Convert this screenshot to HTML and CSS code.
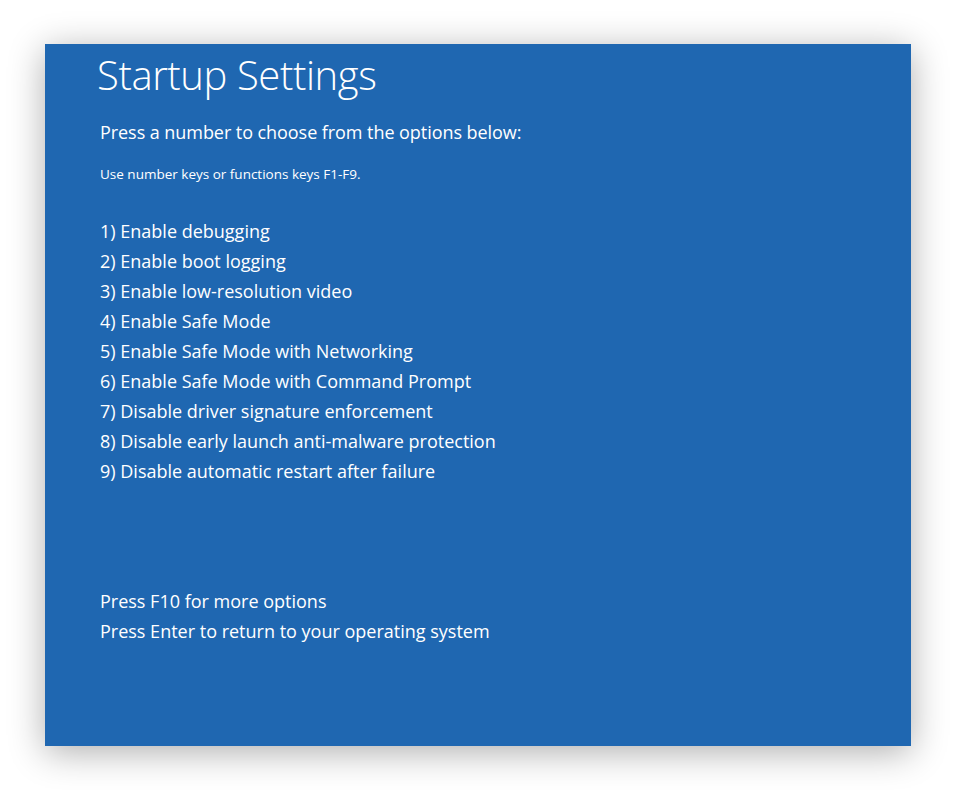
FILE: index.html
```html
<!DOCTYPE html>
<html>
<head>
<meta charset="utf-8">
<link rel="stylesheet" href="styles.css">
</head>
<body>
<div class="screen">
  <h1 class="title">Startup Settings</h1>
  <p class="lead">Press a number to choose from the options below:</p>
  <p class="hint">Use number keys or functions keys F1-F9.</p>
  <ul class="options">
    <li>1) Enable debugging</li>
    <li>2) Enable boot logging</li>
    <li>3) Enable low-resolution video</li>
    <li>4) Enable Safe Mode</li>
    <li>5) Enable Safe Mode with Networking</li>
    <li>6) Enable Safe Mode with Command Prompt</li>
    <li>7) Disable driver signature enforcement</li>
    <li>8) Disable early launch anti-malware protection</li>
    <li>9) Disable automatic restart after failure</li>
  </ul>
  <ul class="options footer">
    <li>Press F10 for more options</li>
    <li>Press Enter to return to your operating system</li>
  </ul>
</div>
</body>
</html>
```

FILE: styles.css
```css
html, body {
  margin: 0;
  padding: 0;
  background: #ffffff;
}
body {
  width: 955px;
  height: 790px;
  overflow: hidden;
}
.screen {
  box-sizing: border-box;
  margin: 44px 0 0 45px;
  width: 866px;
  height: 702px;
  background: #1f67b1;
  box-shadow: 0 6px 34px rgba(0, 0, 0, 0.32);
  padding: 0 0 0 55px;
  color: #ffffff;
  font-family: "Open Sans", "Noto Sans", sans-serif;
  display: flow-root;
}
.title {
  margin: 1px 0 0 -3px;
  font-weight: 300;
  font-size: 40px;
  line-height: 60px;
  letter-spacing: -0.4px;
}
.lead {
  margin: 14px 0 0 0;
  font-size: 18px;
  line-height: 26px;
  font-weight: 400;
  letter-spacing: -0.06px;
}
.hint {
  margin: 20px 0 0 0;
  font-size: 13.5px;
  line-height: 18px;
}
.options {
  list-style: none;
  margin: 33px 0 0 0;
  padding: 0;
  font-size: 18px;
  line-height: 30px;
}
.footer {
  margin-top: 100px;
}
```
